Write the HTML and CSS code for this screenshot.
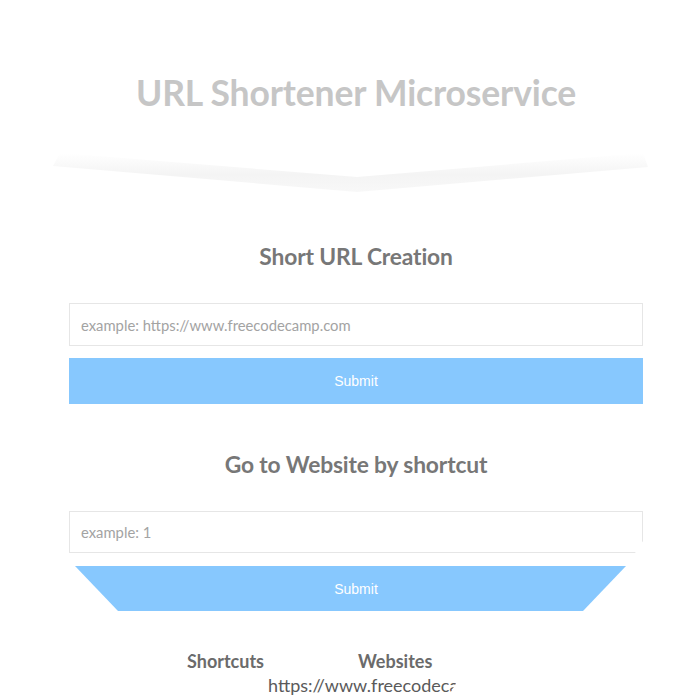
FILE: index.html
```html
<!DOCTYPE html>
<html>
<head>
<meta charset="utf-8">
<link rel="stylesheet" href="styles.css">
</head>
<body>
<header class="hero">
  <h1 class="hero-title">URL Shortener Microservice</h1>
  <svg class="hero-shadow" width="700" height="46" viewBox="0 0 700 46">
    <defs>
      <linearGradient id="sh" x1="0" y1="0" x2="0" y2="1">
        <stop offset="0" stop-color="#ffffff"/>
        <stop offset="0.55" stop-color="#f4f4f4"/>
        <stop offset="1" stop-color="#f8f8f8"/>
      </linearGradient>
    </defs>
    <polygon points="60,4 357,28 643,4 648,18 357,43 53,17" fill="url(#sh)"/>
  </svg>
</header>
<main class="content">
  <section class="block">
    <h2 class="block-title">Short URL Creation</h2>
    <div class="field"><span class="placeholder">example: https://www.freecodecamp.com</span></div>
    <div class="btn">Submit</div>
  </section>
  <section class="block block-second">
    <h2 class="block-title">Go to Website by shortcut</h2>
    <div class="field field-cut"><span class="placeholder">example: 1</span></div>
    <div class="btn btn-cut">Submit</div>
  </section>
  <section class="list">
    <div class="list-row list-head">
      <span class="col-short">Shortcuts</span>
      <span class="col-site">Websites</span>
    </div>
    <div class="list-row list-item">
      <span class="url">https://www.freecodecamp.com</span>
    </div>
  </section>
</main>
</body>
</html>
```
FILE: styles.css
```css
html, body {
  margin: 0;
  padding: 0;
  background: #ffffff;
  overflow: hidden;
}
body {
  width: 700px;
  height: 700px;
  font-family: Lato, "Liberation Sans", sans-serif;
}
.hero {
  padding-top: 73px;
}
.hero-title {
  margin: 0 0 0 12px;
  height: 40px;
  line-height: 40px;
  font-size: 35.5px;
  font-weight: 700;
  color: #c6c6c6;
  text-align: center;
  letter-spacing: -0.15px;
}
.hero-shadow {
  display: block;
  margin-top: 36px;
}
.content {
  margin-left: 69px;
  width: 574px;
}
.block-title {
  margin: 46px 0 0;
  height: 30px;
  line-height: 30px;
  font-size: 22.8px;
  font-weight: 700;
  color: #777777;
  text-align: center;
  letter-spacing: -0.15px;
}
.block-second .block-title {
  margin-top: 45px;
}
.field {
  margin-top: 32px;
  height: 43px;
  box-sizing: border-box;
  border: 1px solid #e6e6e6;
  display: flex;
  align-items: center;
  padding-left: 11px;
}
.placeholder {
  font-size: 14.8px;
  color: #a3a3a3;
}
.btn {
  margin-top: 12px;
  height: 46px;
  background: #87c8fe;
  color: #ffffff;
  font-family: "Liberation Sans", Arial, sans-serif;
  font-size: 14px;
  display: flex;
  align-items: center;
  justify-content: center;
}
.field-cut {
  height: 42px;
  clip-path: polygon(0 0, 100% 0, 100% 30px, calc(100% - 8px) 100%, 0 100%);
}
.btn-cut {
  margin-top: 13px;
  height: 45px;
  clip-path: polygon(6px 0, calc(100% - 17px) 0, calc(100% - 60px) 100%, 49px 100%);
}
.list {
  margin-top: 38px;
  clip-path: polygon(117px 10px, 127px 0, 392px 0, 392px 26px, 380px 46px, 0 46px, 0 10px);
}
.list-row {
  display: flex;
  height: 24px;
  line-height: 24px;
}
.list-head {
  font-size: 18px;
  font-weight: 700;
  color: #6b6b6b;
}
.col-short {
  margin-left: 118px;
}
.col-site {
  margin-left: 94px;
}
.list-item {
  font-size: 18px;
  color: #5a5a5a;
}
.url {
  margin-left: 199px;
  white-space: nowrap;
}
```
